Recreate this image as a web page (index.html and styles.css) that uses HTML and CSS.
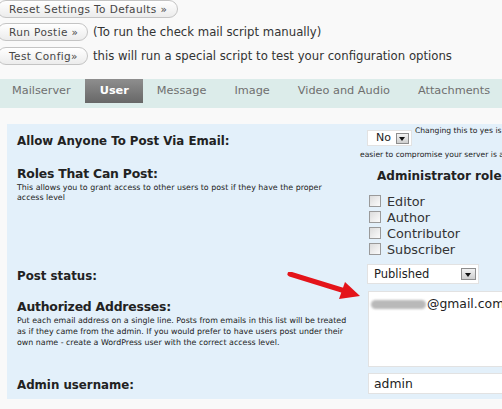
FILE: index.html
```html
<!DOCTYPE html>
<html lang="en">

<head>
    <meta charset="UTF-8">
    <title>Postie Options</title>
    <link rel="stylesheet" href="styles.css">
</head>

<body>
    <section class="actions">
        <div class="action-row">
            <span class="pill">Reset Settings To Defaults &raquo;</span>
        </div>
        <div class="action-row">
            <span class="pill pill-short">Run Postie &raquo;</span>
            <span class="note">(To run the check mail script manually)</span>
        </div>
        <div class="action-row">
            <span class="pill pill-short">Test Config&raquo;</span>
            <span class="note">this will run a special script to test your configuration options</span>
        </div>
    </section>

    <nav class="tabs">
        <span class="tab">Mailserver</span>
        <span class="tab active">User</span>
        <span class="tab">Message</span>
        <span class="tab">Image</span>
        <span class="tab">Video and Audio</span>
        <span class="tab">Attachments</span>
    </nav>

    <main class="panel">
        <div class="row row-allow">
            <div class="label">Allow Anyone To Post Via Email:</div>
            <div class="field small-text">
                <span class="select select-no"><span class="val">No</span><span class="arrow"></span></span>Changing this to yes is NOT recommended - anything that makes it<br>
                easier to compromise your server is a bad idea
            </div>
        </div>

        <div class="row row-roles">
            <div class="label">
                <div class="big">Roles That Can Post:</div>
                <div class="desc">This allows you to grant access to other users to post if they have the proper access level</div>
            </div>
            <div class="field">
                <div class="role-head">Administrator role <span class="faded">can always post</span></div>
                <ul class="roles">
                    <li><input type="checkbox"> Editor</li>
                    <li><input type="checkbox"> Author</li>
                    <li><input type="checkbox"> Contributor</li>
                    <li><input type="checkbox"> Subscriber</li>
                </ul>
            </div>
        </div>

        <div class="row row-status">
            <div class="label">Post status:</div>
            <div class="field">
                <span class="select select-wide"><span class="val">Published</span><span class="arrow"></span></span>
            </div>
        </div>

        <div class="row row-addr">
            <div class="label">
                <div class="big">Authorized Addresses:</div>
                <div class="desc">Put each email address on a single line. Posts from emails in this list will be treated as if they came from the admin. If you would prefer to have users post under their own name - create a WordPress user with the correct access level.</div>
            </div>
            <div class="field">
                <div class="textarea"><span class="blur"></span>@gmail.com</div>
            </div>
        </div>

        <div class="row row-admin">
            <div class="label">Admin username:</div>
            <div class="field">
                <div class="text-input">admin</div>
            </div>
        </div>

        <svg class="red-arrow" width="80" height="36" viewBox="0 0 80 36">
            <line x1="3" y1="2" x2="58" y2="19" stroke="#e4141a" stroke-width="5" stroke-linecap="round"/>
            <polygon points="58,10 73,24 52,27" fill="#e4141a"/>
        </svg>
    </main>
</body>

</html>
```

FILE: styles.css
```css
html,
body {
    margin: 0;
    background: #f9f9f9;
    overflow: hidden;
}

body {
    width: 502px;
    height: 409px;
    font-family: "DejaVu Sans", Verdana, sans-serif;
    color: #333;
}

/* top buttons */
.actions {
    height: 79px;
}

.action-row {
    display: flex;
    align-items: center;
    height: 18px;
    margin-bottom: 6px;
    margin-left: -3px;
}

.action-row:first-child {
    margin-bottom: 5px;
}

.pill {
    box-sizing: border-box;
    height: 18px;
    line-height: 16px;
    padding: 0 10px 0 11px;
    border: 1px solid #c4c4c4;
    border-radius: 10px;
    background: linear-gradient(#ffffff, #ececec);
    color: #464646;
    font-size: 10.5px;
    letter-spacing: 0.4px;
    white-space: nowrap;
}

.pill-short {
    width: 91px;
}

.note {
    margin-left: 5px;
    font-size: 11.7px;
    color: #333;
    white-space: nowrap;
}

/* tabs */
.tabs {
    display: flex;
    height: 29px;
    margin-left: -2px;
    background: #dcecea;
}

.tab {
    height: 24px;
    padding: 0 14px;
    line-height: 24px;
    font-size: 11.3px;
    color: #6f6f6f;
    white-space: nowrap;
}

.tab.active {
    background: linear-gradient(#8e8e8e, #676767);
    color: #fff;
    font-weight: bold;
    padding: 0 14px 0 15px;
}

/* settings panel */
.panel {
    position: relative;
    width: 620px;
    margin: 16px 0 0 7px;
    background: #e3f0fa;
}

.row {
    display: flex;
}

.label {
    box-sizing: border-box;
    flex: none;
    width: 353px;
    padding-left: 10px;
    font-size: 11.8px;
    line-height: 16px;
    font-weight: bold;
    color: #222;
}

.label .big {
    font-size: 12.4px;
    line-height: 18px;
    letter-spacing: -0.2px;
}

.desc {
    font-size: 7.9px;
    line-height: 10px;
    font-weight: normal;
    color: #222;
}

.row-roles .desc {
    width: 322px;
}

.row-addr .desc {
    width: 337px;
    line-height: 11px;
    margin-top: -1px;
}

.field {
    flex: 1;
    white-space: nowrap;
}

.small-text {
    font-size: 7.6px;
    line-height: 10px;
    color: #222;
}

.row-allow {
    height: 36px;
}

.row-allow .label {
    padding-top: 9px;
}

.row-allow .field {
    padding-top: 2px;
}

.row-roles {
    height: 98px;
}

.row-roles .label {
    padding-top: 5px;
}

.row-roles .field {
    padding-top: 8px;
    padding-left: 17px;
}

.row-status {
    height: 30px;
}

.row-status .label {
    padding-top: 10px;
}

.row-status .field {
    padding-top: 6px;
}

.row-addr {
    height: 82px;
}

.row-addr .label {
    padding-top: 10px;
}

.row-addr .field {
    padding-top: 3px;
}

.row-admin {
    height: 29px;
}

.row-admin .label {
    padding-top: 7px;
}

.row-admin .field {
    padding-top: 3px;
}

/* fake form controls */
.select {
    box-sizing: border-box;
    display: inline-flex;
    align-items: center;
    justify-content: space-between;
    vertical-align: top;
    background: #fff;
    border: 1px solid #e2e2e2;
    color: #222;
    font-size: 12px;
    padding: 0 2px 0 6px;
}

.select-no {
    width: 45px;
    height: 16px;
    margin: 4px 3px 4px 7px;
    padding: 0 2px 0 8px;
    font-size: 11px;
}

.select-no .arrow {
    width: 13px;
    height: 11px;
}

.select-no .arrow::after {
    left: 2px;
    top: 3px;
}

.select-wide {
    width: 112px;
    height: 20px;
    margin-left: 7px;
    font-size: 11.5px;
}

.arrow {
    position: relative;
    box-sizing: border-box;
    width: 15px;
    height: 12px;
    border: 1px solid #8d8d8d;
    background: linear-gradient(#f2f2f2, #cfcfcf);
}

.arrow::after {
    content: "";
    position: absolute;
    left: 3px;
    top: 4px;
    border-left: 3.5px solid transparent;
    border-right: 3.5px solid transparent;
    border-top: 4px solid #111;
}

.role-head {
    font-size: 12px;
    line-height: 16px;
    font-weight: bold;
    color: #222;
}

.faded {
    color: #d8b64a;
}

.roles {
    list-style: none;
    margin: 9px 0 0 -8px;
    padding: 0;
}

.roles li {
    display: flex;
    align-items: center;
    height: 16px;
    font-size: 12.8px;
    color: #333;
}

.roles input {
    appearance: none;
    box-sizing: border-box;
    width: 12px;
    height: 12px;
    margin: 0 6px 0 0;
    border: 1px solid #9a9a9a;
    background: linear-gradient(135deg, #dcdcdc, #fbfbfb);
}

.textarea {
    box-sizing: border-box;
    height: 76px;
    margin-left: 8px;
    padding: 4px 0 0 2px;
    background: #fff;
    border: 1px solid #e2e2e2;
    font-size: 12.4px;
    color: #222;
}

.blur {
    display: inline-block;
    width: 55px;
    height: 9px;
    margin-right: 1px;
    border-radius: 5px;
    background: #b9b9b9;
    filter: blur(1px);
    vertical-align: -1px;
}

.text-input {
    box-sizing: border-box;
    height: 21px;
    margin-left: 8px;
    padding: 2px 0 0 5px;
    background: #fff;
    border: 1px solid #e2e2e2;
    font-size: 12.4px;
    color: #222;
}

.red-arrow {
    position: absolute;
    left: 280px;
    top: 148px;
}
```
